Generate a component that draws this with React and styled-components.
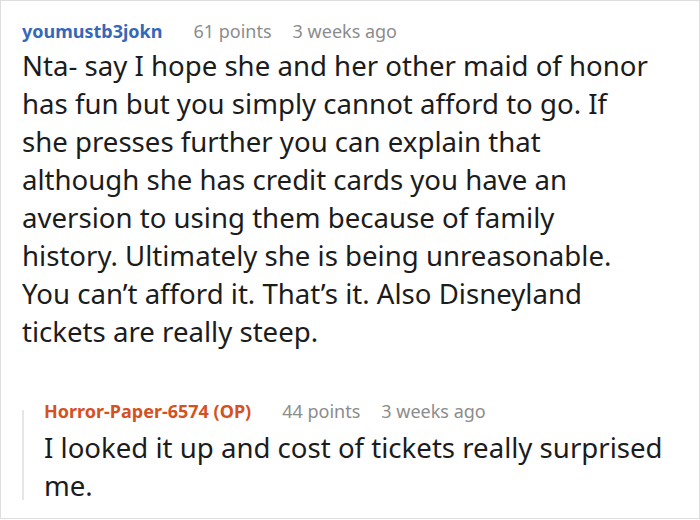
import React from "react";
import styled, { createGlobalStyle } from "styled-components";

const Global = createGlobalStyle`
  html, body { margin: 0; padding: 0; background: #fff; }
  body { font-family: "Noto Sans", "Open Sans", sans-serif; }
`;

const Frame = styled.div`
  box-sizing: border-box;
  width: 700px;
  height: 519px;
  border: 1px solid #dedede;
  padding: 18px 20px 0 21px;
  overflow: hidden;
`;

const Meta = styled.div`
  display: flex;
  align-items: baseline;
  gap: 21px;
  font-size: 18px;
  line-height: 24px;
  white-space: nowrap;
`;

const Author = styled.span`
  font-weight: 700;
  color: ${(p) => (p.$op ? "#d4521f" : "#3667b8")};
  margin-right: 10px;
`;

const Info = styled.span`
  color: #8c8c8c;
`;

const Body = styled.p`
  margin: ${(p) => (p.$reply ? "5px" : "3px")} 0 0;
  padding-right: ${(p) => (p.$reply ? "0" : "26px")};
  font-size: 27.6px;
  line-height: 38px;
  color: #1c1c1c;
`;

const Reply = styled.div`
  position: relative;
  margin-top: 49px;
  padding-left: 22px;

  &::before {
    content: "";
    position: absolute;
    left: 0;
    top: 11px;
    bottom: 4px;
    width: 2px;
    background: #e6e6e6;
  }
`;

function Comment({ author, op, points, ago, children, reply }) {
  return (
    <>
      <Meta>
        <Author $op={op}>{author}</Author>
        <Info>{points} points</Info>
        <Info>{ago}</Info>
      </Meta>
      <Body $reply={reply}>{children}</Body>
    </>
  );
}

export default function App() {
  return (
    <>
      <Global />
      <Frame>
        <Comment author="youmustb3jokn" points={61} ago="3 weeks ago">
          Nta- say I hope she and her other maid of honor has fun but you simply cannot afford to go. If she presses further you can explain that although she has credit cards you have an aversion to using them because of family history. Ultimately she is being unreasonable. You can’t afford it. That’s it. Also Disneyland tickets are really steep.
        </Comment>
        <Reply>
          <Comment author="Horror-Paper-6574 (OP)" op points={44} ago="3 weeks ago" reply>
            I looked it up and cost of tickets really surprised me.
          </Comment>
        </Reply>
      </Frame>
    </>
  );
}
